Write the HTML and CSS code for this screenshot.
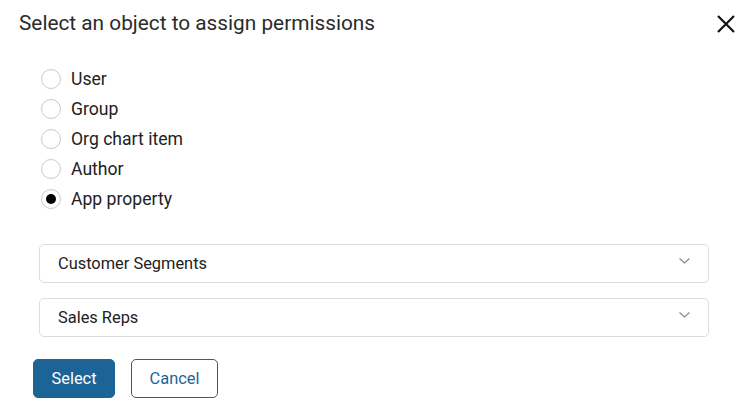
FILE: index.html
```html
<!DOCTYPE html>
<html>
<head>
<meta charset="utf-8">
<link rel="stylesheet" href="styles.css">
</head>
<body>
<div class="dialog">
  <div class="header">
    <h1 class="title">Select an object to assign permissions</h1>
    <button class="close" aria-label="Close">
      <svg width="20" height="20" viewBox="0 0 20 20"><path d="M2 2 L18 18 M18 2 L2 18" stroke="#111" stroke-width="2.2" fill="none"/></svg>
    </button>
  </div>
  <div class="radios">
    <label class="radio"><span class="circle"></span><span>User</span></label>
    <label class="radio"><span class="circle"></span><span>Group</span></label>
    <label class="radio"><span class="circle"></span><span>Org chart item</span></label>
    <label class="radio"><span class="circle"></span><span>Author</span></label>
    <label class="radio"><span class="circle checked"></span><span>App property</span></label>
  </div>
  <div class="selects">
    <div class="select"><span>Customer Segments</span>
      <svg width="11" height="6" viewBox="0 0 11 6"><path d="M0.5 0.5 L5.5 5 L10.5 0.5" stroke="#8a8a8a" stroke-width="1.2" fill="none"/></svg>
    </div>
    <div class="select"><span>Sales Reps</span>
      <svg width="11" height="6" viewBox="0 0 11 6"><path d="M0.5 0.5 L5.5 5 L10.5 0.5" stroke="#8a8a8a" stroke-width="1.2" fill="none"/></svg>
    </div>
  </div>
  <div class="buttons">
    <button class="btn primary">Select</button>
    <button class="btn secondary">Cancel</button>
  </div>
</div>
</body>
</html>
```
FILE: styles.css
```css
* { box-sizing: border-box; }
html, body { margin: 0; padding: 0; background: #fff; }
body { font-family: Roboto, "Liberation Sans", sans-serif; color: #222; }
.dialog { width: 747px; height: 406px; }
.header { display: flex; align-items: center; justify-content: space-between; height: 46px; padding: 0 11px 0 19px; }
.title { margin: 0; font-size: 20.8px; font-weight: 400; color: #2b2b2b; }
.close { background: none; border: 0; padding: 0; width: 20px; height: 20px; display: flex; margin-top: 2px; }
.radios { display: flex; flex-direction: column; padding: 18px 0 0 41px; }
.radio { display: flex; align-items: center; height: 30px; font-size: 17.6px; color: #222; }
.circle { width: 20px; height: 20px; border: 1px solid #c9c9c9; border-radius: 50%; margin-right: 10px; display: flex; align-items: center; justify-content: center; }
.circle.checked::after { content: ""; width: 10px; height: 10px; border-radius: 50%; background: #000; }
.selects { display: flex; flex-direction: column; gap: 15px; padding: 30px 38px 0 39px; }
.select { height: 39px; border: 1px solid #dcdcdc; border-radius: 5px; display: flex; align-items: center; justify-content: space-between; padding: 0 18px 0 18px; font-size: 16.4px; color: #222; }
.select svg { margin-top: -6px; }
.buttons { display: flex; gap: 16px; padding: 22px 0 0 33px; }
.btn { height: 39px; border-radius: 5px; font-family: Roboto, "Liberation Sans", sans-serif; font-size: 16.4px; padding: 0; }
.primary { width: 82px; background: #1d6496; color: #fff; border: 1px solid #1d6496; }
.secondary { width: 87px; background: #fff; color: #1d6496; border: 1px solid #1d6496; }
```
